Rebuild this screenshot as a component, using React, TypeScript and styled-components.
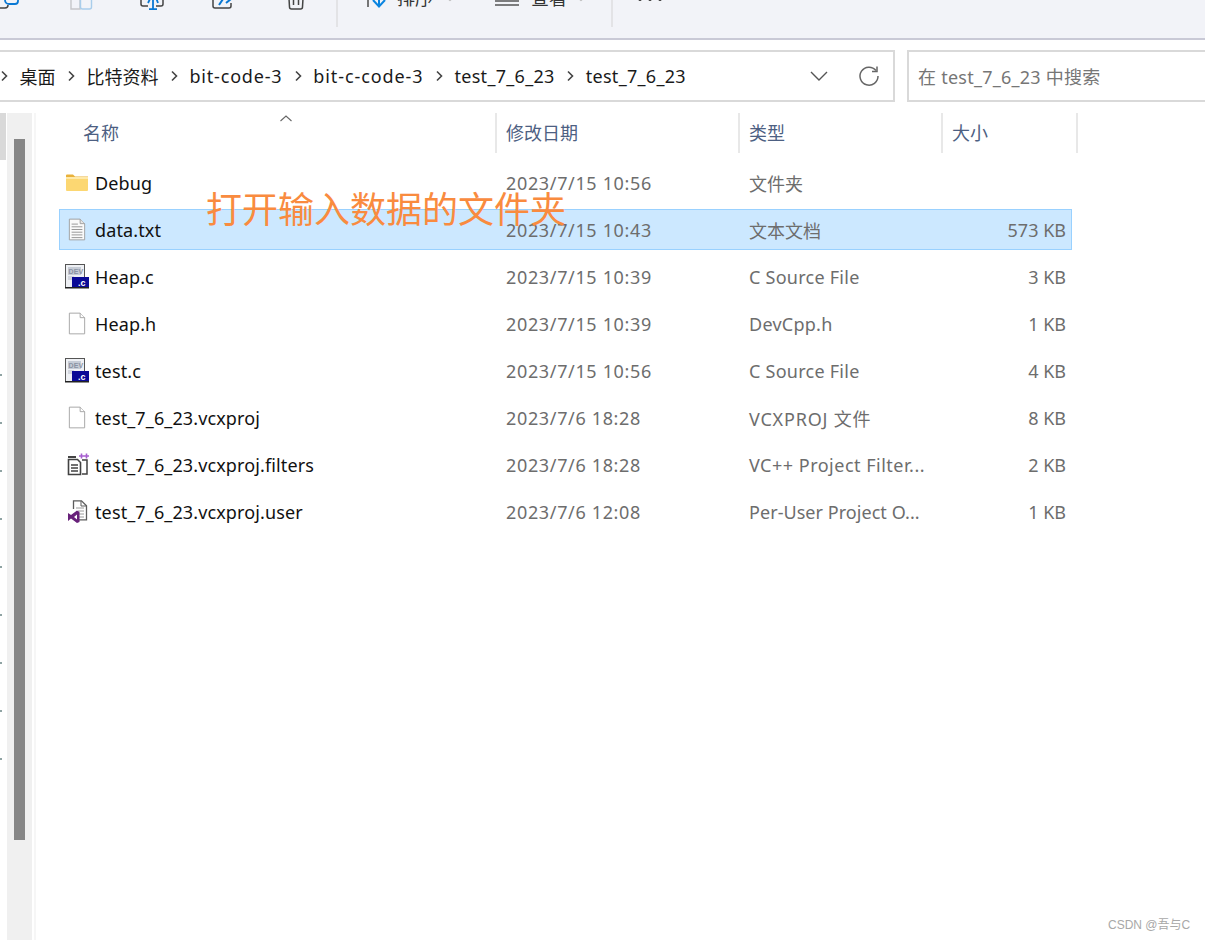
import React from 'react';
import styled, { createGlobalStyle } from 'styled-components';

const Global = createGlobalStyle`
  html, body { margin: 0; padding: 0; background: #fff; }
  body { font-family: "Noto Sans", "Noto Sans CJK SC", sans-serif; }
`;
const Page = styled.div`
  position: relative; width: 1205px; height: 940px; overflow: hidden; background: #fff;
  font-family: "Noto Sans", "Noto Sans CJK SC", sans-serif; font-size: 18px;
`;
const Toolbar = styled.div`
  height: 38px; box-sizing: content-box; background: #f2f3f8; border-bottom: 2px solid #c9c9d6; overflow: hidden;
`;
const ToolRow = styled.div`
  display: flex; align-items: flex-start; height: 41px; margin: -14px 0 0 -26px;
`;
const ToolIcon = styled.div`
  width: 71px; height: 24px; display: flex; justify-content: center; flex: none;
`;
const ToolSep = styled.div`
  width: 2px; height: 41px; background: #e3e3e6; flex: none; margin-left: ${p => p.$ml}px;
`;
const ToolText = styled.span`
  font-size: 18px; line-height: 24px; color: #333; flex: none; margin-left: ${p => p.$ml}px;
`;
const SvgSlot = styled.svg`
  flex: none; display: block; margin-left: ${p => p.$ml || 0}px;
`;
const AddressRow = styled.div`
  display: flex; gap: 12px; padding: 10px 0 11px; margin-left: -4px; width: 1213px;
`;
const AddressBox = styled.div`
  box-sizing: border-box; width: 899px; height: 52px; border: 2px solid #d9d9d9; display: flex; align-items: center; padding-left: 2px; flex: none;
`;
const Crumb = styled.span`
  color: #1a1a1a; font-size: 18px; white-space: nowrap; padding: 0 11.5px; letter-spacing: ${p => p.$ls}px;
`;
const Crumbs = styled.div`
  display: flex; align-items: center; flex: 1;
`;
const AddressTools = styled.div`
  display: flex; align-items: center; gap: 30px; padding-right: 13px;
`;
const SearchBox = styled.div`
  box-sizing: border-box; flex: 1; height: 52px; border: 2px solid #d9d9d9; display: flex; align-items: center; padding-left: 9px; color: #767676; font-size: 18px; white-space: nowrap; letter-spacing: 0.25px;
`;
const Body = styled.div`
  display: flex; height: 827px;
`;
const Rail = styled.div`
  display: flex; width: 36px; flex: none;
`;
const Edge = styled.div`
  width: 7px; flex: none; display: flex; flex-direction: column;
`;
const EdgePatch = styled.div`
  width: 6px; height: 47px; background: #d9d9d9;
`;
const Dots = styled.div`
  display: flex; flex-direction: column; gap: 46px; margin-top: 214px;
`;
const Dot = styled.div`
  width: 2px; height: 2px; background: #8fa3a3;
`;
const Track = styled.div`
  width: 25px; flex: none; background: #f0f0f0; padding-top: 26px; box-sizing: border-box; margin-right: 2px;
`;
const Thumb = styled.div`
  width: 11px; height: 701px; margin-left: 7px; background: #868686;
`;
const RailLine = styled.div`
  width: 2px; background: #f6f6f6; flex: none;
`;
const Main = styled.div`
  flex: 1; min-width: 0;
`;
const Header = styled.div`
  display: grid; grid-template-columns: 461px 243px 203px 135px; height: 40px;
`;
const HeadCell = styled.div`
  position: relative; box-sizing: border-box; border-right: 2px solid #e8e8e8; padding-left: ${p => p.$pl}px; color: #4d6082; font-size: 18px; line-height: 40px;
`;
const SortCaret = styled.svg`
  position: absolute; left: 243px; top: 0;
`;
const List = styled.div`
  display: flex; flex-direction: column; gap: 6px; padding: 9px 0 0 23px;
`;
const Row = styled.div`
  box-sizing: border-box; width: 1013px; height: 41px; display: grid; grid-template-columns: 446px 243px 1fr auto; align-items: center; padding-right: 5px;
  border: 1px solid ${p => (p.$selected ? '#99d1ff' : 'transparent')};
  background: ${p => (p.$selected ? '#cce8ff' : 'transparent')};
`;
const NameCell = styled.div`
  display: flex; align-items: center; color: #111; white-space: nowrap; letter-spacing: 0.12px;
`;
const IconBox = styled.div`
  width: 35px; height: 26px; flex: none; display: flex; align-items: center; padding-left: 8px; box-sizing: border-box;
`;
const Cell = styled.div`
  color: #6d6d6d; white-space: nowrap; letter-spacing: ${p => p.$ls || 0}px;
`;
const Annotation = styled.div`
  position: absolute; left: 206px; top: 184px; font-size: 36px; line-height: 46px; color: #f98b3f; white-space: nowrap; font-family: "Noto Sans CJK SC", sans-serif; font-weight: 400;
`;
const Watermark = styled.div`
  position: absolute; left: 1108px; top: 917px; font-size: 12px; line-height: 16px; color: #a8a8a8; white-space: nowrap; font-family: "Liberation Sans", "Noto Sans CJK SC", sans-serif;
`;

const Chevron = () => (
  <svg width="8" height="12" viewBox="0 0 8 12" fill="none" style={{ flex: 'none' }}>
    <path d="M2 1.5 6.500 6 2 10.500" stroke="#444" strokeWidth="1.6" />
  </svg>
);

const FolderIcon = () => (
  <svg width="23" height="19" viewBox="0 0 23 19" style={{ marginLeft: -2 }}>
    <path d="M0 2.500a1 1 0 0 1 1-1h6l2 2h13v2H0z" fill="#e9b13a" />
    <rect x="0" y="4" width="22" height="14" rx="1" fill="#fcd772" />
    <rect x="0" y="4" width="22" height="2" fill="#ffe9a8" />
  </svg>
);
const TxtIcon = () => (
  <svg width="18" height="23" viewBox="0 0 20 24">
    <path d="M1.500.5h12l5 5v18h-17z" fill="#fafafa" stroke="#9b9b9b" />
    <path d="M13.500.5v5h5" fill="#e6e6e6" stroke="#9b9b9b" />
    <path d="M4 6h7M4 9h12M4 12h12M4 15h12M4 18h12M4 21h12" stroke="#8e8e8e" strokeWidth="1" />
  </svg>
);
const BlankIcon = () => (
  <svg width="18" height="23" viewBox="0 0 20 24">
    <path d="M1.500.5h12l5 5v18h-17z" fill="#fff" stroke="#a0a0a0" />
    <path d="M13.500.5v5h5" fill="#fff" stroke="#a0a0a0" />
  </svg>
);
const DevIcon = () => (
  <svg width="25" height="25" viewBox="0 0 25 25" style={{ marginLeft: -3 }}>
    <rect x="0.500" y="0.500" width="19" height="23" fill="#eef0f4" stroke="#555" />
    <rect x="3" y="3" width="13" height="8" fill="#c6ccd6" />
    <text x="3.500" y="9.500" fontSize="7" fontFamily="Liberation Sans" fontWeight="700" fill="#8a93a3">DEV</text>
    <path d="M3 13h6M3 15h4" stroke="#b7bcc8" />
    <rect x="7" y="13" width="17" height="11" fill="#0a0a96" />
    <rect x="0" y="23" width="24" height="1.500" fill="#222" />
    <text x="13" y="22" fontSize="9" fontFamily="Liberation Sans" fontWeight="700" fill="#fff">.c</text>
  </svg>
);
const FilterIcon = () => (
  <svg width="22" height="23" viewBox="0 0 22 23" style={{ marginLeft: -1 }}>
    <path d="M1 3h8v2H1z" fill="#444" />
    <path d="M1.500 6.500h9l3 3v12h-12z" fill="#fff" stroke="#424242" strokeWidth="1.6" />
    <path d="M4 12h7M4 15h7M4 18h7" stroke="#424242" strokeWidth="1.4" />
    <path d="M15 7h5v14h-5" fill="none" stroke="#424242" strokeWidth="1.5" />
    <path d="M12 3h5M14.500.5v5M17 3h5M19.500.5v5" stroke="#a75fd0" strokeWidth="1.6" />
  </svg>
);
const VsIcon = () => (
  <svg width="20" height="23" viewBox="0 0 20 23">
    <path d="M5.500 9V.8h8l5 5v14H9" fill="#fff" stroke="#5c5c5c" strokeWidth="1.3" />
    <path d="M13 1v5h5" fill="none" stroke="#5c5c5c" />
    <path d="M8 8h8M10 11h6M11 14h5M11 17h5" stroke="#9a9a9a" />
    <path d="M0 13 3 15 9 10.500l2.500 1.500v10l-2.500 1L3 18.500 0 21zM9 14.500 6 17l3 2.500z" fill="#68217a" fillRule="evenodd" />
  </svg>
);

const files = [
  { icon: <FolderIcon />, name: 'Debug', date: '2023/7/15 10:56', type: '文件夹', size: '', ts: 0 },
  { icon: <TxtIcon />, name: 'data.txt', date: '2023/7/15 10:43', type: '文本文档', size: '573 KB', selected: true, ts: 0 },
  { icon: <DevIcon />, name: 'Heap.c', date: '2023/7/15 10:39', type: 'C Source File', size: '3 KB', ts: 0.25 },
  { icon: <BlankIcon />, name: 'Heap.h', date: '2023/7/15 10:39', type: 'DevCpp.h', size: '1 KB', ts: 0.25 },
  { icon: <DevIcon />, name: 'test.c', date: '2023/7/15 10:56', type: 'C Source File', size: '4 KB', ts: 0.25 },
  { icon: <BlankIcon />, name: 'test_7_6_23.vcxproj', date: '2023/7/6 18:28', type: 'VCXPROJ 文件', size: '8 KB', ts: 0.8 },
  { icon: <FilterIcon />, name: 'test_7_6_23.vcxproj.filters', date: '2023/7/6 18:28', type: 'VC++ Project Filter...', size: '2 KB', ts: 0.5 },
  { icon: <VsIcon />, name: 'test_7_6_23.vcxproj.user', date: '2023/7/6 12:08', type: 'Per-User Project O...', size: '1 KB', ts: 0.05 },
];
const crumbs = [
  { label: '桌面', ls: 0 },
  { label: '比特资料', ls: 0 },
  { label: 'bit-code-3', ls: 0.8 },
  { label: 'bit-c-code-3', ls: 0.9 },
  { label: 'test_7_6_23', ls: 0.3 },
  { label: 'test_7_6_23', ls: 0.3 },
];

export default function App() {
  return (
    <Page>
      <Global />
      <Toolbar>
        <ToolRow>
          <ToolIcon>
            <svg width="24" height="24" viewBox="0 0 24 24" fill="none">
              <path d="M7 12v2a4 4 0 0 0 4 4h6a3 3 0 0 0 3-3v-4" stroke="#0a78d4" strokeWidth="1.8" />
              <path d="M0 22h7a3 3 0 0 0 3-3" stroke="#444" strokeWidth="1.5" />
            </svg>
          </ToolIcon>
          <ToolIcon>
            <svg width="24" height="24" viewBox="0 0 24 24" fill="none">
              <path d="M11 5H4a2 2 0 0 0-2 2v16h9z" stroke="#c6c6c9" strokeWidth="1.4" />
              <rect x="11.500" y="5" width="11" height="18" rx="2" stroke="#a9cdeb" strokeWidth="1.4" />
            </svg>
          </ToolIcon>
          <ToolIcon>
            <svg width="24" height="24" viewBox="0 0 24 24" fill="none">
              <path d="M8 20H3a2 2 0 0 1-2-2V6h22v12a2 2 0 0 1-2 2h-5" stroke="#444" strokeWidth="1.5" />
              <path d="M13 5v18M9 23.200h8M8 17l4-8M18 17l-3-8" stroke="#0a78d4" strokeWidth="1.8" />
            </svg>
          </ToolIcon>
          <ToolIcon>
            <svg width="24" height="24" viewBox="0 0 24 24" fill="none">
              <path d="M2 10v10a2 2 0 0 0 2 2h14a2 2 0 0 0 2-2v-3" stroke="#444" strokeWidth="1.5" />
              <path d="M8 19l4-6h7M15 17l5-4-5-4" stroke="#0a78d4" strokeWidth="2" />
            </svg>
          </ToolIcon>
          <ToolIcon>
            <svg width="18" height="24" viewBox="0 0 18 24" fill="none" style={{ marginLeft: 4 }}>
              <path d="M1.500 4l1 17a2 2 0 0 0 2 2h9a2 2 0 0 0 2-2l1-17" stroke="#444" strokeWidth="1.5" />
              <path d="M6.500 12v7M11.500 12v7" stroke="#444" strokeWidth="1.500" />
            </svg>
          </ToolIcon>
          <ToolSep $ml={7} />
          <SvgSlot $ml={28} width="22" height="24" viewBox="0 0 22 24" fill="none">
            <path d="M2 6v15" stroke="#555" strokeWidth="1.6" />
            <path d="M13 6v14M7 14l6 6.500 6-6.500" stroke="#0a84e0" strokeWidth="2" />
          </SvgSlot>
          <ToolText $ml={9}>排序</ToolText>
          <SvgSlot $ml={13} width="8" height="24" viewBox="0 0 8 24" fill="none">
            <path d="M1 12l3 2.500 3-2.500" stroke="#bbb" strokeWidth="1.2" />
          </SvgSlot>
          <SvgSlot $ml={41} width="24" height="24" viewBox="0 0 24 24" fill="none">
            <path d="M0 15h24M0 19h24" stroke="#555" strokeWidth="1.5" />
          </SvgSlot>
          <ToolText $ml={12}>查看</ToolText>
          <SvgSlot $ml={10} width="8" height="24" viewBox="0 0 8 24" fill="none">
            <path d="M1 12l3 2.500 3-2.500" stroke="#bbb" strokeWidth="1.2" />
          </SvgSlot>
          <ToolSep $ml={26} />
          <SvgSlot $ml={24} width="26" height="24" viewBox="0 0 26 24" fill="#333">
            <circle cx="3" cy="13.500" r="1.600" />
            <circle cx="13" cy="13.500" r="1.600" />
            <circle cx="23" cy="13.500" r="1.600" />
          </SvgSlot>
        </ToolRow>
      </Toolbar>
      <AddressRow>
        <AddressBox>
          <Crumbs>
            <Chevron />
            {crumbs.map((c, i) => (
              <React.Fragment key={i}>
                <Crumb $ls={c.ls}>{c.label}</Crumb>
                {i < crumbs.length - 1 && <Chevron />}
              </React.Fragment>
            ))}
          </Crumbs>
          <AddressTools>
            <svg width="18" height="10" viewBox="0 0 18 10" fill="none">
              <path d="M1 1l8 8 8-8" stroke="#555" strokeWidth="1.4" />
            </svg>
            <svg width="22" height="22" viewBox="0 0 22 22" fill="none">
              <path d="M18 5.500A9 9 0 1 0 20 11" stroke="#666" strokeWidth="1.5" />
              <path d="M19 1.500v5h-5" stroke="#666" strokeWidth="1.5" />
            </svg>
          </AddressTools>
        </AddressBox>
        <SearchBox>在 test_7_6_23 中搜索</SearchBox>
      </AddressRow>
      <Body>
        <Rail>
          <Edge>
            <EdgePatch />
            <Dots>
              {Array.from({ length: 9 }, (_, i) => <Dot key={i} />)}
            </Dots>
          </Edge>
          <Track><Thumb /></Track>
          <RailLine />
        </Rail>
        <Main>
          <Header>
            <HeadCell $pl={47}>
              名称
              <SortCaret width="14" height="10" viewBox="0 0 14 10" fill="none">
                <path d="M1.500 8l5.500-5 5.500 5" stroke="#666" strokeWidth="1.1" />
              </SortCaret>
            </HeadCell>
            <HeadCell $pl={9}>修改日期</HeadCell>
            <HeadCell $pl={9}>类型</HeadCell>
            <HeadCell $pl={9}>大小</HeadCell>
          </Header>
          <List>
            {files.map(f => (
              <Row key={f.name} $selected={f.selected}>
                <NameCell><IconBox>{f.icon}</IconBox>{f.name}</NameCell>
                <Cell $ls={0.65}>{f.date}</Cell>
                <Cell $ls={f.ts}>{f.type}</Cell>
                <Cell>{f.size}</Cell>
              </Row>
            ))}
          </List>
        </Main>
      </Body>
      <Annotation>打开输入数据的文件夹</Annotation>
      <Watermark>CSDN @吾与C</Watermark>
    </Page>
  );
}
